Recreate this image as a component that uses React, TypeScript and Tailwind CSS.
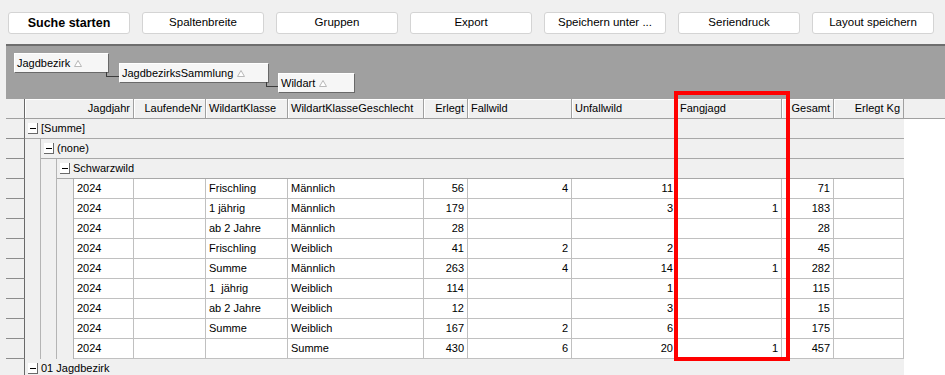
import React from 'react';

interface Col {
  title: string;
  w: string;
  hw: string;
  hRight: boolean;
  right: boolean;
}

const cols: Col[] = [
  { title: 'Jagdjahr', w: 'w-[60px]', hw: 'w-[109px]', hRight: true, right: false },
  { title: 'LaufendeNr', w: 'w-[72px]', hw: 'w-[72px]', hRight: true, right: false },
  { title: 'WildartKlasse', w: 'w-[82px]', hw: 'w-[82px]', hRight: false, right: false },
  { title: 'WildartKlasseGeschlecht', w: 'w-[136px]', hw: 'w-[136px]', hRight: false, right: false },
  { title: 'Erlegt', w: 'w-[44px]', hw: 'w-[44px]', hRight: true, right: true },
  { title: 'Fallwild', w: 'w-[104px]', hw: 'w-[104px]', hRight: false, right: true },
  { title: 'Unfallwild', w: 'w-[105px]', hw: 'w-[105px]', hRight: false, right: true },
  { title: 'Fangjagd', w: 'w-[105px]', hw: 'w-[105px]', hRight: false, right: true },
  { title: 'Gesamt', w: 'w-[52px]', hw: 'w-[52px]', hRight: true, right: true },
  { title: 'Erlegt Kg', w: 'w-[70px]', hw: 'w-[70px]', hRight: true, right: true },
];

const rows: string[][] = [
  ['2024', '', 'Frischling', 'Männlich', '56', '4', '11', '', '71', ''],
  ['2024', '', '1 jährig', 'Männlich', '179', '', '3', '1', '183', ''],
  ['2024', '', 'ab 2 Jahre', 'Männlich', '28', '', '', '', '28', ''],
  ['2024', '', 'Frischling', 'Weiblich', '41', '2', '2', '', '45', ''],
  ['2024', '', 'Summe', 'Männlich', '263', '4', '14', '1', '282', ''],
  ['2024', '', '1  jährig', 'Weiblich', '114', '', '1', '', '115', ''],
  ['2024', '', 'ab 2 Jahre', 'Weiblich', '12', '', '3', '', '15', ''],
  ['2024', '', 'Summe', 'Weiblich', '167', '2', '6', '', '175', ''],
  ['2024', '', '', 'Summe', '430', '6', '20', '1', '457', ''],
];

const buttons = ['Suche starten', 'Spaltenbreite', 'Gruppen', 'Export', 'Speichern unter ...', 'Seriendruck', 'Layout speichern'];

const Tri = () => (
  <svg width="8" height="7" viewBox="0 0 8 7" className="ml-[4px]">
    <polygon points="4,0.5 7.5,6.5 0.5,6.5" fill="#ffffff" stroke="#b8b8b8" strokeWidth="1" />
  </svg>
);

const Chip = ({ label, w }: { label: string; w: string }) => (
  <div className={`${w} h-[20px] flex items-center pl-[2px] bg-[#f6f6f6] border border-t-white border-l-white border-r-[#696969] border-b-[#696969]`}>
    <span>{label}</span>
    <Tri />
  </div>
);

const Selector = () => (
  <div className="w-[19px] h-full shrink-0 bg-[#f0f0f0] border-r border-b border-r-[#696969] border-b-[#8c8c8c]" />
);

const Indent = ({ w }: { w: string }) => (
  <div className={`${w} h-full shrink-0 bg-[#f0f0f0] border-r border-[#b4b4b4]`} />
);

const Expander = () => (
  <div className="w-[10px] h-[11px] ml-[3px] mr-[3px] bg-white border-r border-b border-[#696969] flex items-center justify-center">
    <div className="w-[6px] h-px bg-black" />
  </div>
);

const GroupRow = ({ label, level }: { label: string; level: number }) => {
  const widths = ['w-[879px]', 'w-[863px]', 'w-[847px]'];
  return (
    <div className="flex h-[20px]">
      <Selector />
      {level >= 2 && <Indent w="w-[16px]" />}
      {level >= 3 && <Indent w="w-[16px]" />}
      <div className={`${widths[level - 1]} h-full flex items-center bg-[#f0f0f0] border-b border-[#a8a8a8]`}>
        <Expander />
        <span>{label}</span>
      </div>
      <div className="flex-1 bg-white" />
    </div>
  );
};

export default function App() {
  return (
    <div className="relative w-[945px] h-[375px] overflow-hidden bg-[#f0f0f0] text-black text-[11px] leading-none" style={{ fontFamily: '"Liberation Sans", Arial, sans-serif' }}>
      {/* Toolbar */}
      <div className="h-[44px] flex items-start gap-[12px] pl-[8px] pt-[12px]">
        {buttons.map((b, i) => (
          <div
            key={b}
            className={`w-[122px] h-[22px] flex items-center justify-center bg-white border border-[#d4d4d4] rounded-[3px] ${i === 0 ? 'font-bold text-[12.5px]' : 'text-[11.5px]'}`}
          >
            {b}
          </div>
        ))}
      </div>

      {/* Grid control */}
      <div className="ml-[6px] flex flex-col">
        {/* Group-by panel */}
        <div className="h-[55px] bg-[#a0a0a0] border-t-2 border-[#6e6e6e] flex items-start pl-[8px]">
          <div className="mt-[7px]">
            <Chip label="Jagdbezirk" w="w-[95px]" />
          </div>
          <div className="relative mt-[17px] ml-[10px]">
            <div className="absolute left-[-13px] top-[9px] w-[13px] h-[5px] border-l border-b border-[#3c3c3c]" />
            <Chip label="JagdbezirksSammlung" w="w-[150px]" />
          </div>
          <div className="relative mt-[27px] ml-[9px]">
            <div className="absolute left-[-12px] top-[9px] w-[12px] h-[5px] border-l border-b border-[#3c3c3c]" />
            <Chip label="Wildart" w="w-[77px]" />
          </div>
        </div>

        {/* Header */}
        <div className="flex h-[20px] bg-[#f0f0f0]">
          <div className="w-[19px] h-full shrink-0 border-r border-b border-r-[#696969] border-b-[#a0a0a0]" />
          {cols.map((c) => (
            <div
              key={c.title}
              className={`${c.hw} h-full shrink-0 flex items-center px-[3px] border-r border-b border-[#a0a0a0] shadow-[inset_1px_1px_0_#ffffff] ${c.hRight ? 'justify-end' : 'justify-start'}`}
            >
              {c.title}
            </div>
          ))}
          <div className="flex-1 h-full border-b border-[#a0a0a0]" />
        </div>

        {/* Body */}
        <GroupRow label="[Summe]" level={1} />
        <GroupRow label="(none)" level={2} />
        <GroupRow label="Schwarzwild" level={3} />
        {rows.map((r, ri) => (
          <div key={ri} className="flex h-[20px]">
            <Selector />
            <Indent w="w-[16px]" />
            <Indent w="w-[16px]" />
            <Indent w="w-[17px]" />
            {cols.map((c, ci) => (
              <div
                key={c.title}
                className={`${c.w} h-full shrink-0 flex items-center bg-white px-[3px] border-r border-b border-[#c0c0c0] whitespace-pre ${c.right ? 'justify-end' : 'justify-start'}`}
              >
                {r[ci]}
              </div>
            ))}
            <div className="flex-1 bg-white" />
          </div>
        ))}
        <GroupRow label="01 Jagdbezirk" level={1} />
      </div>

      {/* Highlight */}
      <div className="absolute left-[674px] top-[91px] w-[116px] h-[270px] border-4 border-[#ff0000]" />
    </div>
  );
}
